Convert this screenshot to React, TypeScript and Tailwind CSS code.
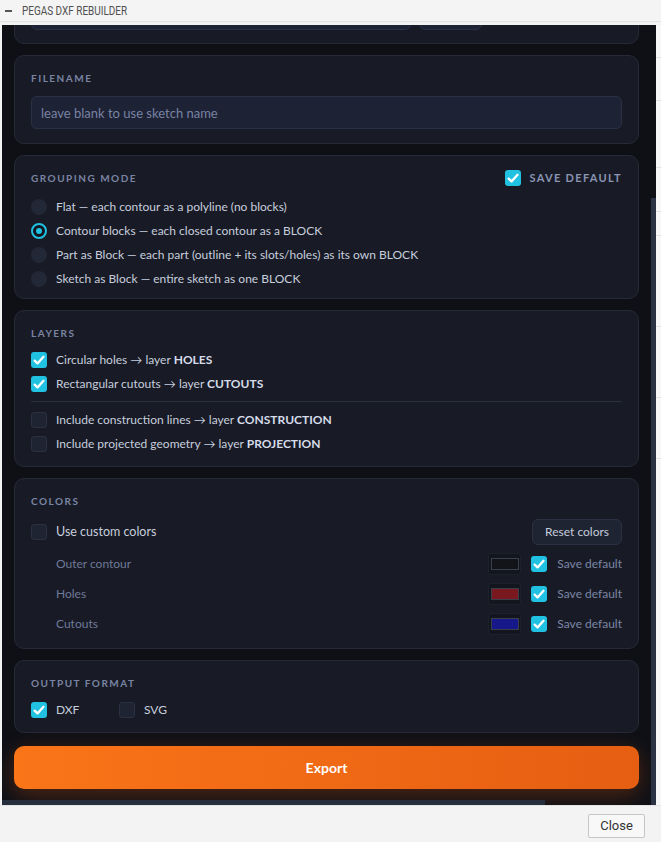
import React, { useLayoutEffect, useRef } from "react";

const font = "font-['Lato','Noto_Sans',sans-serif]";

function CheckBox({ checked }: { checked: boolean }) {
  if (checked) {
    return (
      <span className="flex h-4 w-4 shrink-0 items-center justify-center rounded-[3px] bg-[#20c1e1]">
        <svg viewBox="0 0 16 16" className="h-4 w-4">
          <path
            d="M3.6 8.6 6.5 11.4 12.5 4.8"
            fill="none"
            stroke="#ffffff"
            strokeWidth="2.3"
            strokeLinecap="round"
            strokeLinejoin="round"
          />
        </svg>
      </span>
    );
  }
  return <span className="h-4 w-4 shrink-0 rounded-[3px] border border-[#2b3142] bg-[#1f2432]" />;
}

function Radio({ checked }: { checked: boolean }) {
  if (checked) {
    return (
      <span className="flex h-4 w-4 shrink-0 items-center justify-center rounded-full border-2 border-[#20c1e1] bg-[#131620]">
        <span className="h-[6px] w-[6px] rounded-full bg-[#20c1e1]" />
      </span>
    );
  }
  return <span className="h-4 w-4 shrink-0 rounded-full bg-[#232837]" />;
}

function Label({ children }: { children: React.ReactNode }) {
  return (
    <div className="text-[10px] font-bold leading-4 tracking-[0.15em] text-[#7a84a3]">{children}</div>
  );
}

function Card({
  children,
  className = "",
  innerRef,
}: {
  children: React.ReactNode;
  className?: string;
  innerRef?: React.Ref<HTMLElement>;
}) {
  return (
    <section
      ref={innerRef}
      className={`rounded-[10px] border border-[#252a36] bg-[#181b25] px-4 pt-[14px] ${className}`}
    >
      {children}
    </section>
  );
}

const modes = [
  { text: "Flat — each contour as a polyline (no blocks)", on: false },
  { text: "Contour blocks — each closed contour as a BLOCK", on: true },
  { text: "Part as Block — each part (outline + its slots/holes) as its own BLOCK", on: false },
  { text: "Sketch as Block — entire sketch as one BLOCK", on: false },
];

const colorRows = [
  { name: "Outer contour", swatch: "bg-[#121419]" },
  { name: "Holes", swatch: "bg-[#7a1820]" },
  { name: "Cutouts", swatch: "bg-[#16188a]" },
];

function LayerRow({ on, text, bold }: { on: boolean; text: string; bold: string }) {
  return (
    <div className="flex h-[18px] items-center gap-[9px]">
      <CheckBox checked={on} />
      <span>
        {text} <span className="font-bold text-[#d6dcea]">{bold}</span>
      </span>
    </div>
  );
}

export default function App() {
  const scrollRef = useRef<HTMLDivElement>(null);
  const fileRef = useRef<HTMLElement>(null);

  // keep the palette scrolled so the filename section sits near the top
  useLayoutEffect(() => {
    if (scrollRef.current && fileRef.current) {
      scrollRef.current.scrollTop = fileRef.current.offsetTop - 30;
    }
  }, []);

  return (
    <div className={`flex h-[842px] w-[661px] flex-col bg-[#f3f3f3] ${font}`}>
      {/* palette title bar */}
      <div className="flex h-[22px] shrink-0 items-center gap-[10px] border-b border-[#e1e1e1] bg-[#f4f4f4] pl-[5px] text-[#505050]">
        <span className="h-[2px] w-[7px] shrink-0 bg-[#555]" />
        <span className="inline-block origin-left scale-x-[0.83] whitespace-nowrap font-['Roboto',sans-serif] text-[12px] leading-4">
          PEGAS DXF REBUILDER
        </span>
      </div>

      <div className="mt-[3px] flex">
        <div className="w-[2px]" />
        <div className="relative h-[780px] w-[654px] bg-[#0e1016]">
          <div ref={scrollRef} className="relative h-full overflow-hidden">
            <div className="ml-3 flex w-[625px] flex-col gap-[11px] pb-8 pt-3 text-[12px] text-[#c7cede]">
              {/* sketch picker */}
              <Card className="pb-[13px]">
                <div className="flex gap-2 pt-[26px]">
                  <div className="h-[33px] w-[380px] rounded-md border border-[#2b3145] bg-[#1d2234]" />
                  <div className="h-[33px] w-[63px] rounded-md border border-[#2b3145] bg-[#1d2234]" />
                </div>
              </Card>

              {/* filename */}
              <Card className="pb-[14px]" innerRef={fileRef}>
                <Label>FILENAME</Label>
                <input
                  className="mt-[10px] block h-[33px] w-full rounded-md border border-[#2b3145] bg-[#1d2234] px-[9px] text-[13px] text-[#c5ccdb] outline-none placeholder:text-[#7983a4]"
                  placeholder="leave blank to use sketch name"
                />
              </Card>

              {/* grouping */}
              <Card className="pb-[10px]">
                <div className="flex h-4 items-center justify-between">
                  <Label>GROUPING MODE</Label>
                  <div className="flex items-center gap-2">
                    <CheckBox checked />
                    <span className="text-[11px] font-bold tracking-[0.12em] text-[#8a94b3]">SAVE DEFAULT</span>
                  </div>
                </div>
                <div className="mt-3 flex flex-col gap-[6px]">
                  {modes.map((m) => (
                    <div key={m.text} className="flex h-[18px] items-center gap-[9px]">
                      <Radio checked={m.on} />
                      <span>{m.text}</span>
                    </div>
                  ))}
                </div>
              </Card>

              {/* layers */}
              <Card className="pb-[13px]">
                <Label>LAYERS</Label>
                <div className="mt-[10px] flex flex-col gap-[6px]">
                  <LayerRow on text="Circular holes → layer" bold="HOLES" />
                  <LayerRow on text="Rectangular cutouts → layer" bold="CUTOUTS" />
                </div>
                <div className="mb-[9px] mt-2 h-px bg-[#2a2f3c]" />
                <div className="flex flex-col gap-[6px]">
                  <LayerRow on={false} text="Include construction lines → layer" bold="CONSTRUCTION" />
                  <LayerRow on={false} text="Include projected geometry → layer" bold="PROJECTION" />
                </div>
              </Card>

              {/* colors */}
              <Card className="pb-[13px]">
                <Label>COLORS</Label>
                <div className="mt-[10px] flex flex-col gap-2">
                  <div className="flex h-[26px] items-center justify-between">
                    <div className="flex items-center gap-[9px]">
                      <CheckBox checked={false} />
                      <span className="text-[12.5px]">Use custom colors</span>
                    </div>
                    <button className="h-[26px] rounded-md border border-[#2b3142] bg-[#1f2432] px-3 text-[12px] text-[#c5ccdb]">
                      Reset colors
                    </button>
                  </div>
                  {colorRows.map((r) => (
                    <div key={r.name} className="flex h-[22px] items-center justify-between">
                      <span className="pl-[25px] text-[12px] text-[#6f7998]">{r.name}</span>
                      <div className="flex items-center">
                        <span className="flex h-[22px] w-[33px] items-center justify-center rounded-[3px] border border-[#1d212b] bg-[#13161e]">
                          <span className={`h-[12px] w-[28px] border border-[#3a3f4c] ${r.swatch}`} />
                        </span>
                        <span className="ml-[10px]">
                          <CheckBox checked />
                        </span>
                        <span className="ml-[10px] text-[12px] text-[#7c86a5]">Save default</span>
                      </div>
                    </div>
                  ))}
                </div>
              </Card>

              {/* output format */}
              <Card className="pb-[13px]">
                <Label>OUTPUT FORMAT</Label>
                <div className="mt-[10px] flex h-[18px] items-center">
                  <div className="flex w-[88px] items-center gap-[9px]">
                    <CheckBox checked />
                    <span>DXF</span>
                  </div>
                  <div className="flex items-center gap-[9px]">
                    <CheckBox checked={false} />
                    <span>SVG</span>
                  </div>
                </div>
              </Card>

              <button className="mt-[2px] h-[43px] w-full rounded-[10px] bg-linear-to-r from-[#fa7418] to-[#e65e12] text-[14px] font-bold text-white shadow-[0_6px_22px_rgba(234,88,12,0.3)]">
                Export
              </button>
            </div>
          </div>
          {/* scroll thumbs */}
          <div className="absolute bottom-0 right-0 top-[173px] w-[5px] bg-[#2b3243]" />
          <div className="absolute bottom-0 left-0 h-[5px] w-[543px] bg-[#262d3c]" />
        </div>
        <div className="flex h-[780px] flex-1 flex-col bg-[#f7f7f7]">
          <div className="mt-[32px] h-px bg-[#e2e2e2]" />
          <div className="mt-[42px] h-px bg-[#e2e2e2]" />
          <div className="mt-[66px] h-px bg-[#e2e2e2]" />
          <div className="mt-[43px] h-px bg-[#e2e2e2]" />
          <div className="mt-[23px] h-px bg-[#e2e2e2]" />
          <div className="mt-[90px] h-px bg-[#e2e2e2]" />
          <div className="mt-[70px] h-px bg-[#e2e2e2]" />
          <div className="mt-[60px] h-px bg-[#e2e2e2]" />
        </div>
      </div>

      {/* footer */}
      <div className="flex flex-1 items-start justify-end border-t border-[#e4e4e4] pr-4 pt-2">
        <button className="h-6 w-[57px] rounded-[2px] border border-[#c6c6c6] bg-[#f8f8f8] font-['Roboto',sans-serif] text-[13px] text-[#333]">
          Close
        </button>
      </div>
    </div>
  );
}
